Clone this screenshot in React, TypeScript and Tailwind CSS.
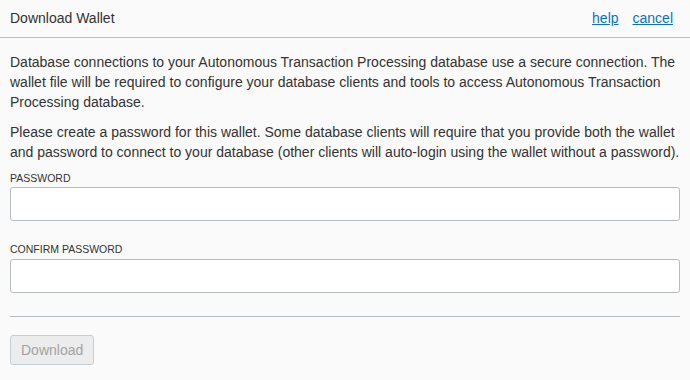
export default function App() {
  return (
    <div className="w-[690px] h-[380px] bg-[#fafafa] text-[#333] font-['Liberation_Sans',Arial,sans-serif] overflow-hidden">
      {/* Header */}
      <div className="h-[38px] flex items-center justify-between px-[10px] border-b border-[#b6bcc1]">
        <span className="text-[14px]">Download Wallet</span>
        <div className="flex gap-[14px] text-[14px] pr-[7px]">
          <a href="#" className="text-[#0572ce] underline">help</a>
          <a href="#" className="text-[#0572ce] underline">cancel</a>
        </div>
      </div>

      <div className="px-[10px] pt-[14px]">
        <p className="text-[14px] leading-[20px]">
          Database connections to your Autonomous Transaction Processing database use a secure connection. The
          wallet file will be required to configure your database clients and tools to access Autonomous Transaction
          Processing database.
        </p>
        <p className="text-[14px] leading-[20px] mt-[10px]">
          Please create a password for this wallet. Some database clients will require that you provide both the wallet
          and password to connect to your database (other clients will auto-login using the wallet without a password).
        </p>

        <label className="block text-[10.5px] leading-[12px] mt-[10px] mb-[3px] uppercase">Password</label>
        <input
          type="password"
          className="block w-full h-[34px] bg-white border border-[#b6bcc1] rounded-[3px] outline-none"
        />

        <label className="block text-[10.5px] leading-[12px] mt-[22px] mb-[4px] uppercase">Confirm Password</label>
        <input
          type="password"
          className="block w-full h-[34px] bg-white border border-[#b6bcc1] rounded-[3px] outline-none"
        />

        <div className="mt-[23px] border-t border-[#b6bcc1]" />

        <button
          disabled
          className="mt-[18px] h-[30px] px-[10px] text-[14px] text-[#a3a3a3] bg-[#ececec] border border-[#c4ced7] rounded-[3px]"
        >
          Download
        </button>
      </div>
    </div>
  );
}
